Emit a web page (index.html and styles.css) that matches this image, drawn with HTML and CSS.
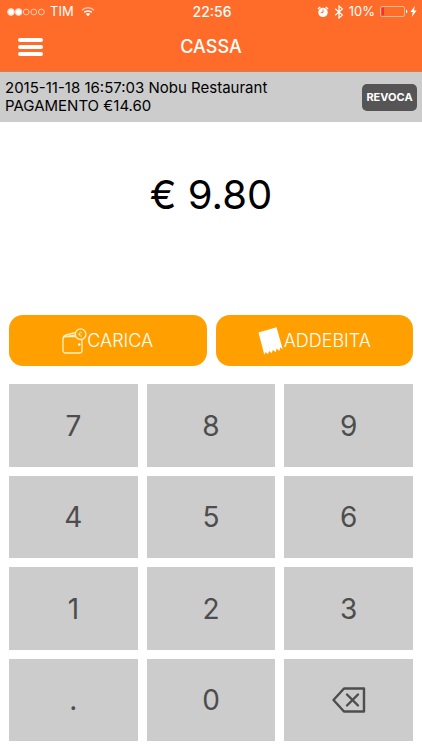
FILE: index.html
```html
<!DOCTYPE html>
<html lang="it">
    <head>
        <meta charset="UTF-8">
        <meta name="viewport" content="width=device-width, initial-scale=1">
        <title>Cassa</title>
        <link rel="stylesheet" href="styles.css">
    </head>
    <body>
        <header class="top">
            <div class="status">
                <div class="status-left">
                    <svg class="signal" width="38" height="8" viewBox="0 0 38 8">
                        <circle cx="4" cy="4" r="3.4" fill="#fff"/>
                        <circle cx="11.6" cy="4" r="3.4" fill="#fff"/>
                        <circle cx="19.2" cy="4" r="2.9"/>
                        <circle cx="26.8" cy="4" r="2.9"/>
                        <circle cx="34.4" cy="4" r="2.9"/>
                    </svg>
                    <span>TIM</span>
                    <svg class="wifi" width="14" height="11" viewBox="0 0 14 11">
                        <path d="M1 4.2a8.6 8.6 0 0 1 12 0" opacity=".6"/>
                        <path d="M3.2 6.4a5.5 5.5 0 0 1 7.6 0"/>
                        <path d="M4.9 8.1a3 3 0 0 1 4.2 0L7 10.2z" fill="#fff" stroke="none"/>
                    </svg>
                </div>
                <span class="clock">22:56</span>
                <div class="status-right">
                    <svg class="alarm" width="12" height="12" viewBox="0 0 12 12">
                        <circle cx="6" cy="6.4" r="4.7" fill="#fff"/>
                        <path d="M.9 3L3.3.9M11.1 3L8.7.9" stroke="#fff" stroke-width="1.3"/>
                        <path d="M6 3.6v3H3.8" fill="none" stroke="#ff6c29" stroke-width="1"/>
                    </svg>
                    <svg class="bluetooth" width="10" height="14" viewBox="0 0 10 14">
                        <path d="M1.2 3.8l7.2 6.3L5 13V1l3.4 2.9-7.2 6.3" fill="none" stroke="#fff" stroke-width="1.2"/>
                    </svg>
                    <span>10%</span>
                    <div class="power">
                        <svg class="battery" width="28" height="11" viewBox="0 0 28 11">
                            <rect x=".5" y=".5" width="24" height="10" rx="1.5" fill="none" stroke="#ffb58f"/>
                            <rect x="1.5" y="1.5" width="2.5" height="8" fill="#ff2d2d"/>
                            <path d="M26 3.5c1.8.6 1.8 3.4 0 4z" fill="#fff"/>
                        </svg>
                        <svg class="bolt" width="7" height="11" viewBox="0 0 7 11">
                            <path d="M4.8 0L.4 6h2.4L1.8 11l4.8-6.4H4z" fill="#fff"/>
                        </svg>
                    </div>
                </div>
            </div>
            <div class="navbar">
                <button type="button" class="menu" aria-label="Menu">
                    <span class="line"></span>
                    <span class="line"></span>
                    <span class="line"></span>
                </button>
                <h1 class="title">CASSA</h1>
            </div>
        </header>

        <section class="last">
            <p class="last-text">2015-11-18 16:57:03 Nobu Restaurant<br>PAGAMENTO €14.60</p>
            <button type="button" class="revoke">REVOCA</button>
        </section>

        <main class="cash">
            <output class="amount" id="amount">€ 9.80</output>

            <div class="actions">
                <button type="button" class="action">
                    <svg width="25" height="26" viewBox="0 0 25 26" fill="none" stroke="#fff3c4" stroke-width="1.3" stroke-linejoin="round">
                        <rect x="1" y="8.5" width="19" height="16.5" rx="2.5"/>
                        <path d="M1.3 9.6Q1.6 7.6 4 7l9-2.4M6 8.4l7.5-1.6"/>
                        <circle cx="18.6" cy="6.2" r="5.3" fill="#ffa000"/>
                        <path d="M19.8 4.4c-1.8-.6-2.6.6-2.6 1.8s.8 2.4 2.6 1.8M16.4 6.2h2.2" stroke-width=".8"/>
                        <circle cx="17.2" cy="16.5" r="1.2" fill="#fff" stroke="none"/>
                    </svg>
                    <span>CARICA</span>
                </button>
                <button type="button" class="action">
                    <svg width="26" height="28" viewBox="0 0 26 28">
                        <path d="M.5 5.6L18.5.3 24.8 22.4 22.3 20.3 21.4 24 18.7 21.5 17.6 25.2 14.9 22.7 13.7 26.2 11.2 23.9 9.8 27.2 7.8 25 6.3 27.8z" fill="#fff"/>
                    </svg>
                    <span>ADDEBITA</span>
                </button>
            </div>

            <div class="keypad">
                <button type="button" class="key">7</button>
                <button type="button" class="key">8</button>
                <button type="button" class="key">9</button>
                <button type="button" class="key">4</button>
                <button type="button" class="key">5</button>
                <button type="button" class="key">6</button>
                <button type="button" class="key">1</button>
                <button type="button" class="key">2</button>
                <button type="button" class="key">3</button>
                <button type="button" class="key">.</button>
                <button type="button" class="key">0</button>
                <button type="button" class="key" aria-label="Cancella">
                    <svg width="34" height="26" viewBox="0 0 34 26" fill="none" stroke="#4d4d4d" stroke-width="2.4" stroke-linejoin="round" stroke-linecap="round">
                        <path d="M12 1.500h20v23H12L1.500 13z"/>
                        <path d="M15 7.500l11 11M26 7.500l-11 11"/>
                    </svg>
                </button>
            </div>
        </main>
    </body>
</html>
```

FILE: styles.css
```css
* {
    box-sizing: border-box;
}

body {
    margin: 0;
    min-height: 100vh;
    display: flex;
    flex-direction: column;
    background-color: #fff;
    color: #000;
    font-family: Inter, "Liberation Sans", sans-serif;
}

button {
    border: none;
    padding: 0;
    margin: 0;
    font-family: inherit;
    cursor: pointer;
}

svg {
    display: block;
    flex: none;
}

/* header */
.top {
    background-color: #ff6c29;
    color: #fff;
    border-bottom: 1px solid #c8825f;
}

.status {
    display: grid;
    grid-template-columns: 1fr auto 1fr;
    align-items: center;
    height: 23px;
    padding: 0 5px 0 7px;
    font-size: 13px;
    line-height: 23px;
}

.status-left,
.status-right,
.power {
    display: flex;
    align-items: center;
}

.status-left {
    gap: 5px;
}

.status-right {
    justify-content: flex-end;
    gap: 5px;
}

.power {
    gap: 2px;
}

.signal {
    fill: none;
    stroke: #ffc9ae;
    stroke-width: 1;
}

.wifi {
    margin-left: 2px;
    fill: none;
    stroke: #fff;
    stroke-width: 1.5px;
}

.clock {
    font-weight: 500;
    font-size: 14px;
}

.navbar {
    display: grid;
    grid-template-columns: 1fr auto 1fr;
    align-items: center;
    height: 48px;
    padding: 0 18px;
}

.menu {
    display: flex;
    flex-direction: column;
    gap: 3px;
    width: 25px;
    background: none;
}

.line {
    height: 4px;
    border-radius: 2px;
    background-color: #fff;
}

.title {
    margin: 0;
    font-size: 18px;
    font-weight: 500;
    line-height: 24px;
}

/* last payment */
.last {
    display: flex;
    align-items: center;
    justify-content: space-between;
    padding: 7px 5px;
    background-color: #ccc;
}

.last-text {
    margin: 0;
    font-size: 15px;
    line-height: 18px;
}

.revoke {
    width: 55px;
    height: 27px;
    border-radius: 5px;
    background-color: #555;
    color: #fff;
    font-size: 11px;
    font-weight: 700;
}

/* amount and keypad */
.cash {
    flex: 1;
    display: flex;
    flex-direction: column;
    padding: 0 9px 9px;
}

.amount {
    padding: 49px 0 96px;
    font-size: 40px;
    line-height: 48px;
    text-align: center;
}

.actions {
    display: grid;
    grid-template-columns: 1fr 1fr;
    gap: 9px;
    margin-bottom: 18px;
}

.action {
    display: flex;
    align-items: center;
    justify-content: center;
    height: 51px;
    border-radius: 14px;
    background-color: #ffa000;
    color: #fff;
    font-size: 18px;
    font-weight: 300;
}

.keypad {
    flex: 1;
    display: grid;
    grid-template-columns: repeat(3, 1fr);
    grid-auto-rows: 1fr;
    gap: 9px;
}

.key {
    display: flex;
    align-items: center;
    justify-content: center;
    min-height: 48px;
    padding-top: 1px;
    background-color: #ccc;
    color: #4d4d4d;
    font-size: 28px;
}

.key:active {
    background-color: #b3b3b3;
}
```
